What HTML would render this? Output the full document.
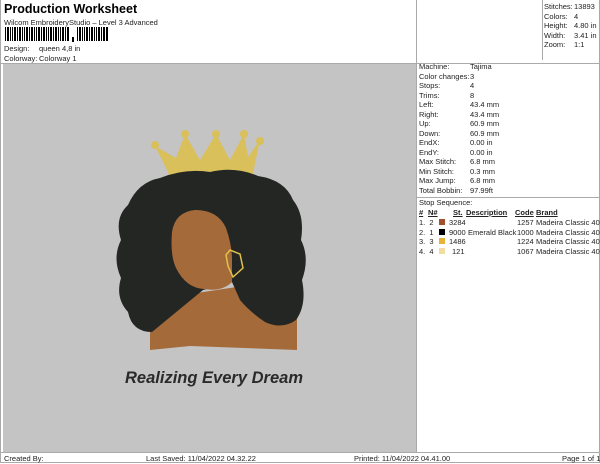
<!DOCTYPE html>
<html><head><style>
body{margin:0;width:600px;height:464px;background:#fff;font-family:"Liberation Sans",sans-serif;font-size:7.5px;color:#222;position:relative;overflow:hidden}
.a{position:absolute;white-space:nowrap}
table{border-collapse:collapse}
td{padding:0;height:9.5px;font-size:7.5px;white-space:nowrap}
</style></head><body>
<div class="a" style="left:4px;top:2px;font-size:12.5px;font-weight:bold;color:#000">Production Worksheet</div>
<div class="a" style="left:4px;top:18px">Wilcom EmbroideryStudio – Level 3 Advanced</div>
<svg class="a" style="left:5px;top:27px" width="105" height="16">
<g fill="#000">
<rect x="0" y="0" width="1" height="14"/><rect x="2" y="0" width="2" height="14"/><rect x="5" y="0" width="1" height="14"/><rect x="7" y="0" width="1" height="14"/><rect x="9" y="0" width="2" height="14"/><rect x="12" y="0" width="1" height="14"/><rect x="14" y="0" width="2" height="14"/><rect x="17" y="0" width="1" height="14"/><rect x="19" y="0" width="1" height="14"/><rect x="21" y="0" width="2" height="14"/><rect x="24" y="0" width="1" height="14"/><rect x="26" y="0" width="2" height="14"/><rect x="29" y="0" width="1" height="14"/><rect x="31" y="0" width="1" height="14"/><rect x="33" y="0" width="2" height="14"/><rect x="36" y="0" width="1" height="14"/><rect x="38" y="0" width="2" height="14"/><rect x="41" y="0" width="1" height="14"/><rect x="43" y="0" width="1" height="14"/><rect x="45" y="0" width="2" height="14"/><rect x="48" y="0" width="1" height="14"/><rect x="50" y="0" width="2" height="14"/><rect x="53" y="0" width="1" height="14"/><rect x="55" y="0" width="1" height="14"/><rect x="57" y="0" width="2" height="14"/><rect x="60" y="0" width="1" height="14"/><rect x="62" y="0" width="2" height="14"/>
<rect x="67" y="10" width="2" height="5"/>
<rect x="72" y="0" width="1" height="14"/><rect x="74" y="0" width="2" height="14"/><rect x="77" y="0" width="1" height="14"/><rect x="79" y="0" width="1" height="14"/><rect x="81" y="0" width="2" height="14"/><rect x="84" y="0" width="1" height="14"/><rect x="86" y="0" width="2" height="14"/><rect x="89" y="0" width="1" height="14"/><rect x="91" y="0" width="1" height="14"/><rect x="93" y="0" width="2" height="14"/><rect x="96" y="0" width="1" height="14"/><rect x="98" y="0" width="2" height="14"/><rect x="101" y="0" width="2" height="14"/>
</g></svg>
<div class="a" style="left:4px;top:44px">Design:</div><div class="a" style="left:39px;top:44px">queen 4,8 in</div>
<div class="a" style="left:4px;top:54px">Colorway:</div><div class="a" style="left:39px;top:54px">Colorway 1</div>
<div class="a" style="left:0;top:63px;width:599px;height:1px;background:#aaa"></div>
<div class="a" style="left:3px;top:64px;width:413px;height:388px;background:#c4c4c4"></div>
<div class="a" style="left:416px;top:0;width:1px;height:452px;background:#aaa"></div>
<div class="a" style="left:542px;top:0;width:1px;height:60px;background:#aaa"></div>
<div class="a" style="left:0;top:452px;width:600px;height:1px;background:#aaa"></div>
<div class="a" style="left:0;top:462px;width:600px;height:1px;background:#aaa"></div>
<div class="a" style="left:599px;top:0;width:1px;height:463px;background:#aaa"></div>
<div class="a" style="left:0;top:0;width:1px;height:463px;background:#aaa"></div>
<div class="a" style="left:416px;top:197px;width:183px;height:1px;background:#aaa"></div>
<table class="a" style="left:544px;top:2px"><tr><td style="width:30px">Stitches:</td><td>13893</td></tr><tr><td>Colors:</td><td>4</td></tr><tr><td>Height:</td><td>4.80 in</td></tr><tr><td>Width:</td><td>3.41 in</td></tr><tr><td>Zoom:</td><td>1:1</td></tr></table>
<table class="a" style="left:419px;top:62px"><tr><td style="width:51px">Machine:</td><td>Tajima</td></tr><tr><td>Color changes:</td><td>3</td></tr><tr><td>Stops:</td><td>4</td></tr><tr><td>Trims:</td><td>8</td></tr><tr><td>Left:</td><td>43.4 mm</td></tr><tr><td>Right:</td><td>43.4 mm</td></tr><tr><td>Up:</td><td>60.9 mm</td></tr><tr><td>Down:</td><td>60.9 mm</td></tr><tr><td>EndX:</td><td>0.00 in</td></tr><tr><td>EndY:</td><td>0.00 in</td></tr><tr><td>Max Stitch:</td><td>6.8 mm</td></tr><tr><td>Min Stitch:</td><td>0.3 mm</td></tr><tr><td>Max Jump:</td><td>6.8 mm</td></tr><tr><td>Total Bobbin:</td><td>97.99ft</td></tr></table>
<div class="a" style="left:419px;top:198px">Stop Sequence:</div>
<div class="a" style="left:419px;top:208px;font-weight:bold;text-decoration:underline">#</div>
<div class="a" style="left:428px;top:208px;font-weight:bold;text-decoration:underline">N#</div>
<div class="a" style="left:453px;top:208px;font-weight:bold;text-decoration:underline">St.</div>
<div class="a" style="left:466px;top:208px;font-weight:bold;text-decoration:underline">Description</div>
<div class="a" style="left:515px;top:208px;font-weight:bold;text-decoration:underline">Code</div>
<div class="a" style="left:536px;top:208px;font-weight:bold;text-decoration:underline">Brand</div>
<div style="position:absolute;left:419px;top:218px;line-height:9.6px">
<div style="position:relative;height:9.6px">1.&nbsp; 2<span class="a" style="left:20px;top:1px;width:6px;height:6px;background:#a0522d"></span><span class="a" style="left:30px">3284</span><span class="a" style="left:98px">1257</span><span class="a" style="left:117px">Madeira Classic 40</span></div>
<div style="position:relative;height:9.6px">2.&nbsp; 1<span class="a" style="left:20px;top:1px;width:6px;height:6px;background:#000"></span><span class="a" style="left:30px">9000</span><span class="a" style="left:49px">Emerald Black</span><span class="a" style="left:98px">1000</span><span class="a" style="left:117px">Madeira Classic 40</span></div>
<div style="position:relative;height:9.6px">3.&nbsp; 3<span class="a" style="left:20px;top:1px;width:6px;height:6px;background:#e6b33a"></span><span class="a" style="left:30px">1486</span><span class="a" style="left:98px">1224</span><span class="a" style="left:117px">Madeira Classic 40</span></div>
<div style="position:relative;height:9.6px">4.&nbsp; 4<span class="a" style="left:20px;top:1px;width:6px;height:6px;background:#f3dca0"></span><span class="a" style="left:33px">121</span><span class="a" style="left:98px">1067</span><span class="a" style="left:117px">Madeira Classic 40</span></div>
</div>
<svg class="a" style="left:0;top:0" width="417" height="452">
<path d="M168 172 L155 146 L176 158 L185 134 L200 160 L216 134 L230 160 L244 134 L248 157 L260 140 L252 178 L170 178 Z" fill="#d9c05a"/>
<circle cx="155" cy="145" r="4" fill="#d9c05a"/><circle cx="185" cy="134" r="4" fill="#d9c05a"/><circle cx="216" cy="134" r="4" fill="#d9c05a"/><circle cx="244" cy="134" r="4" fill="#d9c05a"/><circle cx="260" cy="141" r="4" fill="#d9c05a"/>
<path d="M150 300 L250 285 L297 300 L297 350 L190 346 L150 350 Z" fill="#a56a3a"/>
<path d="M160 178 Q185 168 210 172 Q235 166 258 176 Q285 180 293 200 Q305 215 301 240 Q310 258 302 280 Q307 305 296 320 Q282 330 265 322 Q250 312 240 300 L232 282 L203 290 L152 332 Q132 332 128 312 Q115 298 121 278 Q112 258 121 240 Q114 218 128 205 Q138 182 160 178 Z" fill="#232623"/>
<path d="M172 232 Q175 212 195 210 Q218 210 226 228 Q232 245 232 260 L232 282 Q222 292 204 289 Q186 288 176 268 Q170 255 172 232 Z" fill="#a56a3a"/>
<path d="M226 255 L230 250 L240 254 L243 268 L233 277 L228 266 Z" fill="none" stroke="#e0c24a" stroke-width="1.5"/>
<text x="125" y="383" font-family="Liberation Sans,sans-serif" font-size="17" font-style="italic" font-weight="bold" fill="#2a2a2a" textLength="178" lengthAdjust="spacingAndGlyphs">Realizing Every Dream</text>
</svg>
<div class="a" style="left:4px;top:454px">Created By:</div>
<div class="a" style="left:146px;top:454px">Last Saved: 11/04/2022 04.32.22</div>
<div class="a" style="left:354px;top:454px">Printed: 11/04/2022 04.41.00</div>
<div class="a" style="left:562px;top:454px">Page 1 of 1</div>
</body></html>
